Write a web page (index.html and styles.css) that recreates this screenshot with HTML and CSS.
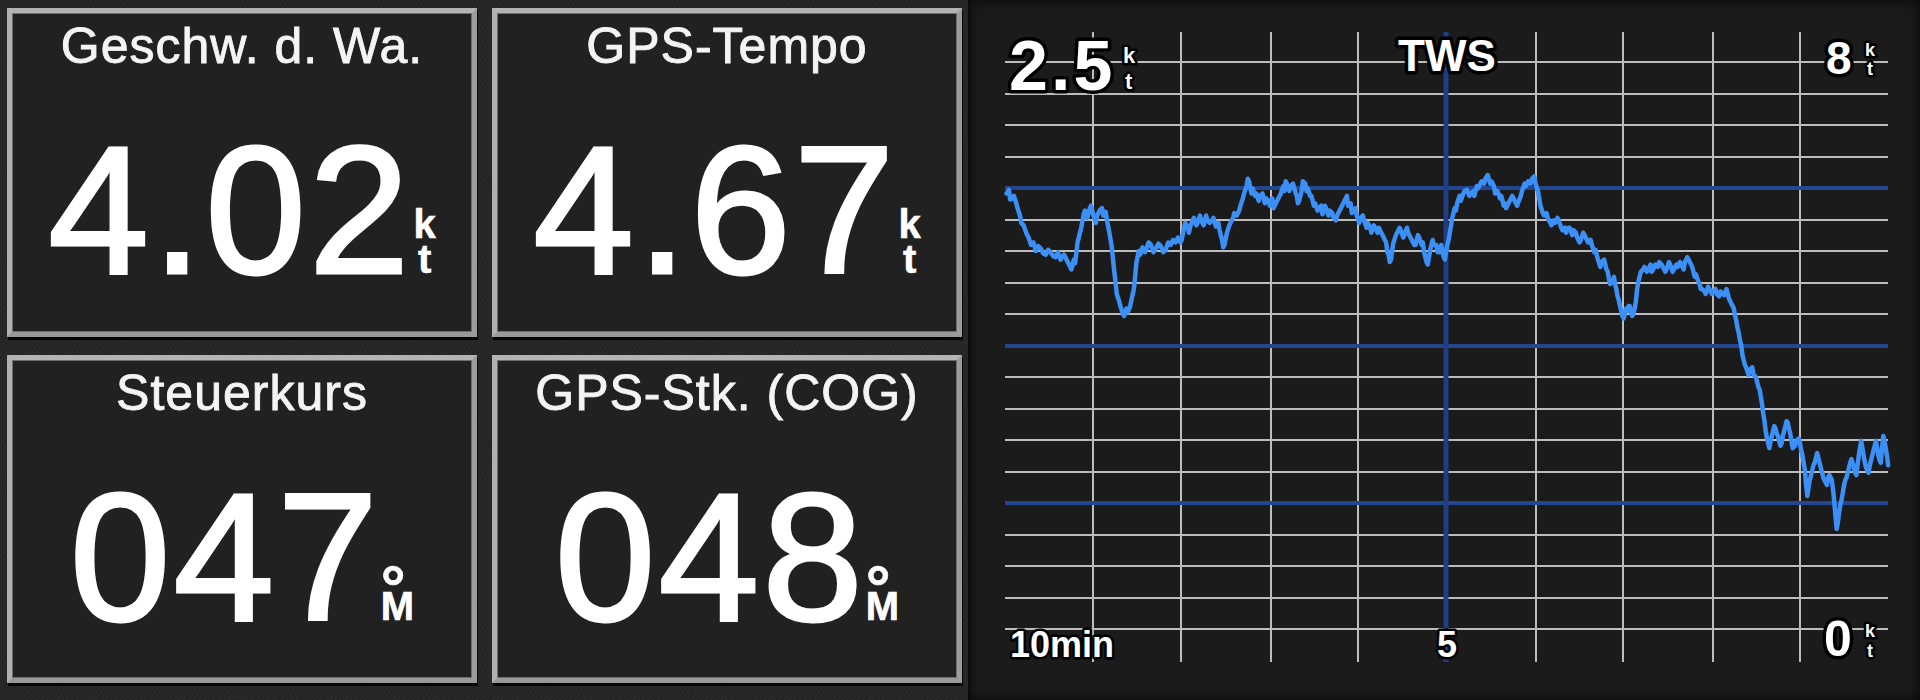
FILE: index.html
```html
<!DOCTYPE html>
<html lang="de">
<head>
<meta charset="utf-8">
<title>Instrumente</title>
<link rel="stylesheet" href="styles.css">
</head>
<body>
<div class="screen">
  <div class="tiles">
    <div class="tile">
      <div class="title">Geschw. d. Wa.</div>
      <div class="value"><span class="num">4.02</span><span class="unit"><span class="u">k</span><span class="u">t</span></span></div>
    </div>
    <div class="tile">
      <div class="title">GPS-Tempo</div>
      <div class="value"><span class="num">4.67</span><span class="unit"><span class="u">k</span><span class="u">t</span></span></div>
    </div>
    <div class="tile">
      <div class="title">Steuerkurs</div>
      <div class="value"><span class="num">047</span><span class="unit unit-deg"><span class="u"><span class="deg">°</span></span><span class="u">M</span></span></div>
    </div>
    <div class="tile">
      <div class="title">GPS-Stk. (COG)</div>
      <div class="value"><span class="num">048</span><span class="unit unit-deg"><span class="u"><span class="deg">°</span></span><span class="u">M</span></span></div>
    </div>
  </div>
  <div class="chart">
    <svg class="chart-svg" width="952" height="700" viewBox="968 0 952 700" xmlns="http://www.w3.org/2000/svg">
      <g class="grid-gray">
        <line x1="1005" x2="1888" y1="62" y2="62"/>
        <line x1="1005" x2="1888" y1="94" y2="94"/>
        <line x1="1005" x2="1888" y1="125" y2="125"/>
        <line x1="1005" x2="1888" y1="157" y2="157"/>
        <line x1="1005" x2="1888" y1="220" y2="220"/>
        <line x1="1005" x2="1888" y1="251" y2="251"/>
        <line x1="1005" x2="1888" y1="283" y2="283"/>
        <line x1="1005" x2="1888" y1="314" y2="314"/>
        <line x1="1005" x2="1888" y1="377" y2="377"/>
        <line x1="1005" x2="1888" y1="409" y2="409"/>
        <line x1="1005" x2="1888" y1="440" y2="440"/>
        <line x1="1005" x2="1888" y1="472" y2="472"/>
        <line x1="1005" x2="1888" y1="535" y2="535"/>
        <line x1="1005" x2="1888" y1="566" y2="566"/>
        <line x1="1005" x2="1888" y1="598" y2="598"/>
        <line x1="1005" x2="1888" y1="629" y2="629"/>
        <line x1="1093" x2="1093" y1="32" y2="662"/>
        <line x1="1181" x2="1181" y1="32" y2="662"/>
        <line x1="1271" x2="1271" y1="32" y2="662"/>
        <line x1="1358" x2="1358" y1="32" y2="662"/>
        <line x1="1536" x2="1536" y1="32" y2="662"/>
        <line x1="1623" x2="1623" y1="32" y2="662"/>
        <line x1="1713" x2="1713" y1="32" y2="662"/>
        <line x1="1800" x2="1800" y1="32" y2="662"/>
      </g>
      <g class="grid-blue">
        <line x1="1005" x2="1888" y1="188" y2="188"/>
        <line x1="1005" x2="1888" y1="346" y2="346"/>
        <line x1="1005" x2="1888" y1="503" y2="503"/>
        <line class="vblue" x1="1446" x2="1446" y1="32" y2="662"/>
      </g>
      <g transform="scale(1.22449)">
        <polyline class="trace" points="822,158 824,155 825,163 828,160 830,166 831,170 833,176 834,182 836,184 838,190 840,194 842,200 844,198 846,205 848,201 850,203 852,207 854,208 856,204 858,206 860,209 862,210 864,206 866,212 869,208 871,212 872,214 874,218 875,220 877,212 878,215 880,198 882,190 883,186 885,175 886,172 888,178 890,170 891,168 893,176 895,182 896,176 898,172 900,170 901,176 903,173 904,180 906,190 907,196 908,202 910,222 911,230 912,240 914,246 915,250 917,256 918,258 920,252 921,255 923,250 924,245 926,236 927,226 928,215 930,205 931,208 933,202 935,206 936,204 938,198 940,200 942,206 944,203 946,199 948,201 950,206 952,204 954,198 956,200 958,196 960,198 962,194 964,198 965,196 967,186 968,182 970,186 971,190 972,185 974,180 975,178 977,184 978,182 980,176 981,180 983,184 985,176 986,180 988,182 990,180 991,178 993,185 995,182 996,188 998,196 999,202 1000,200 1002,190 1004,184 1005,182 1007,178 1008,174 1010,176 1012,172 1013,168 1015,162 1016,158 1018,152 1019,146 1020,148 1022,158 1023,154 1025,160 1026,158 1028,164 1029,160 1031,158 1033,166 1034,162 1036,164 1037,168 1039,162 1040,170 1042,166 1043,164 1045,160 1046,158 1048,152 1049,156 1050,148 1051,150 1053,156 1054,152 1056,150 1057,154 1059,160 1060,166 1061,164 1063,156 1064,148 1066,150 1067,156 1068,154 1070,160 1071,160 1073,168 1074,166 1076,172 1077,170 1079,168 1080,175 1082,168 1083,170 1085,176 1086,172 1088,174 1089,178 1091,180 1092,176 1094,172 1095,170 1097,166 1098,164 1100,160 1101,168 1103,166 1104,174 1105,172 1107,170 1108,176 1110,182 1111,178 1113,176 1114,180 1116,186 1117,182 1119,186 1120,190 1122,184 1123,186 1125,190 1126,186 1128,190 1129,192 1131,196 1132,198 1133,206 1134,208 1135,214 1136,212 1137,204 1138,198 1140,192 1141,190 1143,186 1144,188 1146,194 1147,192 1149,186 1150,190 1152,194 1153,196 1155,200 1156,200 1158,192 1159,194 1161,200 1162,198 1163,206 1164,210 1165,214 1166,216 1167,210 1168,204 1170,196 1171,200 1173,200 1174,206 1176,206 1177,200 1179,210 1180,212 1181,206 1182,200 1183,196 1185,184 1186,178 1188,170 1189,172 1190,166 1192,160 1193,164 1195,158 1196,156 1198,155 1200,160 1201,158 1203,156 1204,160 1206,152 1207,154 1209,150 1210,148 1212,150 1213,146 1215,143 1217,150 1218,148 1220,152 1221,158 1223,156 1225,162 1226,160 1228,168 1229,166 1230,170 1232,166 1233,164 1235,160 1236,162 1238,166 1239,168 1240,165 1242,160 1243,156 1245,150 1246,152 1248,148 1250,150 1251,146 1253,144 1254,150 1256,156 1257,162 1258,168 1260,174 1261,176 1263,174 1264,178 1266,182 1267,184 1269,180 1270,182 1272,178 1273,180 1275,186 1276,188 1278,186 1279,190 1281,186 1282,186 1284,192 1285,188 1287,190 1288,194 1290,198 1291,196 1293,190 1294,192 1296,196 1297,198 1299,196 1300,200 1302,206 1303,204 1304,208 1305,212 1307,218 1308,214 1310,212 1311,216 1312,220 1313,222 1314,228 1315,232 1317,230 1318,226 1319,232 1320,236 1321,242 1322,245 1323,250 1324,254 1325,258 1326,260 1328,252 1329,254 1330,250 1331,250 1333,258 1334,256 1335,252 1336,246 1337,236 1338,230 1339,226 1340,222 1342,220 1343,218 1345,222 1346,220 1348,216 1349,222 1351,218 1352,216 1354,218 1355,214 1357,216 1358,218 1360,222 1361,220 1363,214 1364,216 1366,222 1367,220 1369,216 1370,218 1372,214 1373,216 1375,220 1376,214 1378,210 1379,212 1381,216 1382,218 1384,226 1385,224 1387,230 1388,232 1389,236 1390,236 1392,238 1393,240 1395,234 1396,236 1398,240 1399,238 1401,236 1402,240 1404,242 1405,238 1407,240 1408,241 1410,236 1411,240 1412,244 1413,246 1415,250 1416,252 1417,258 1418,262 1419,268 1420,272 1421,278 1422,282 1423,290 1424,294 1425,298 1426,300 1428,306 1429,302 1431,300 1432,306 1434,308 1435,312 1436,316 1437,318 1438,324 1439,330 1440,338 1441,344 1442,352 1443,358 1444,362 1445,366 1446,360 1447,356 1449,348 1450,350 1451,354 1452,356 1454,364 1455,362 1456,356 1457,352 1459,344 1460,345 1461,350 1462,354 1463,360 1464,366 1466,364 1467,360 1469,358 1470,362 1471,368 1472,372 1473,378 1474,384 1475,396 1476,405 1477,398 1478,392 1479,388 1480,384 1481,380 1482,378 1483,374 1484,370 1485,374 1486,378 1487,382 1488,386 1489,390 1490,392 1491,394 1492,396 1493,390 1494,388 1495,390 1496,392 1497,400 1498,410 1499,422 1500,432 1501,426 1502,418 1503,412 1504,408 1505,402 1506,396 1507,392 1508,390 1509,386 1510,382 1511,378 1512,375 1513,378 1514,382 1515,386 1516,388 1517,380 1518,372 1519,366 1520,360 1521,366 1522,372 1523,378 1524,382 1525,384 1526,386 1527,380 1528,376 1529,372 1530,368 1531,364 1532,360 1533,366 1534,372 1535,376 1536,378 1537,366 1538,356 1539,360 1540,366 1541,372 1542,380"/>
      </g>
      <g class="labels">
        <text class="lbl lbl-big" x="1009" y="90" font-size="70" letter-spacing="3">2.5</text>
        <text class="lbl" x="1123" y="63" font-size="22">k</text>
        <text class="lbl" x="1125" y="89" font-size="22">t</text>
        <text class="lbl lbl-big" x="1447" y="71" font-size="44" text-anchor="middle">TWS</text>
        <text class="lbl lbl-big" x="1826" y="74" font-size="46">8</text>
        <text class="lbl" x="1865" y="56" font-size="18">k</text>
        <text class="lbl" x="1867" y="75" font-size="18">t</text>
        <text class="lbl" x="1010" y="657" font-size="36">10min</text>
        <text class="lbl" x="1447" y="657" font-size="36" text-anchor="middle">5</text>
        <text class="lbl lbl-big" x="1824" y="656" font-size="50">0</text>
        <text class="lbl" x="1865" y="637" font-size="18">k</text>
        <text class="lbl" x="1867" y="657" font-size="18">t</text>
      </g>
    </svg>
  </div>
</div>
</body>
</html>
```

FILE: styles.css
```css
* { box-sizing: border-box; }

html, body {
  margin: 0;
  padding: 0;
}

body {
  width: 1920px;
  height: 700px;
  overflow: hidden;
  background-color: #262626;
  background-image:
    repeating-linear-gradient(35deg, rgba(255,255,255,0.025) 0 1px, transparent 1px 3px),
    repeating-linear-gradient(-55deg, rgba(0,0,0,0.12) 0 1px, transparent 1px 4px);
  font-family: "Liberation Sans", Arial, sans-serif;
  color: #fff;
}

.screen {
  display: flex;
  height: 700px;
}

.tiles {
  display: grid;
  grid-template-columns: 470px 470px;
  grid-template-rows: 329px 328px;
  column-gap: 15px;
  row-gap: 18px;
  padding: 8px 0 0 7px;
  width: 962px;
  flex: 0 0 962px;
}

.tile {
  background: #212121;
  border: 5px solid #a9a9a9;
  border-top-color: #b4b4b4;
  border-left-color: #b0b0b0;
  border-right-color: #9c9c9c;
  border-bottom-color: #999;
  box-shadow: 1px 3px 0 #060606, inset 0 0 0 1px #6e6e6e;
  text-align: center;
}

.title {
  padding-top: 9px;
  font-size: 50px;
  line-height: 49px;
  letter-spacing: 1px;
  color: #f4f4f4;
  -webkit-text-stroke: 0.9px #f4f4f4;
  white-space: nowrap;
}

.value {
  margin-top: 50px;
  font-size: 181px;
  line-height: 178px;
  white-space: nowrap;
  color: #fff;
}

.num {
  letter-spacing: 3px;
  -webkit-text-stroke: 3px #fff;
}

.unit {
  display: inline-block;
  vertical-align: baseline;
  margin-left: 1px;
  font-size: 40px;
  font-weight: bold;
  line-height: 35px;
  letter-spacing: 0;
  text-align: center;
  -webkit-text-stroke: 0.6px #fff;
}

.unit-deg {
  margin-left: 0;
  text-align: left;
}

.u {
  display: block;
}

.deg {
  font-size: 62px;
  line-height: 0;
  vertical-align: -24px;
}

.chart {
  margin-left: 6px;
  width: 952px;
  height: 700px;
  flex: 0 0 952px;
  background: #1b1b1b;
  box-shadow: inset 0 0 14px rgba(0,0,0,0.75), inset 2px 0 0 #111;
}

.chart-svg {
  display: block;
}

.grid-gray line {
  stroke: #bcbcbc;
  stroke-width: 2;
}

.grid-blue line {
  stroke: #23468f;
  stroke-width: 4;
}

.grid-blue .vblue {
  stroke: #1f3d80;
  stroke-width: 5;
}

.trace {
  fill: none;
  stroke: #3b8ff5;
  stroke-width: 4.5;
  stroke-linejoin: round;
  stroke-linecap: round;
  vector-effect: non-scaling-stroke;
}

.lbl {
  font-family: "Liberation Sans", Arial, sans-serif;
  font-weight: bold;
  fill: #fff;
  stroke: #000;
  stroke-width: 5px;
  stroke-linejoin: round;
  paint-order: stroke;
}

.lbl-big {
  stroke-width: 7px;
}
```
